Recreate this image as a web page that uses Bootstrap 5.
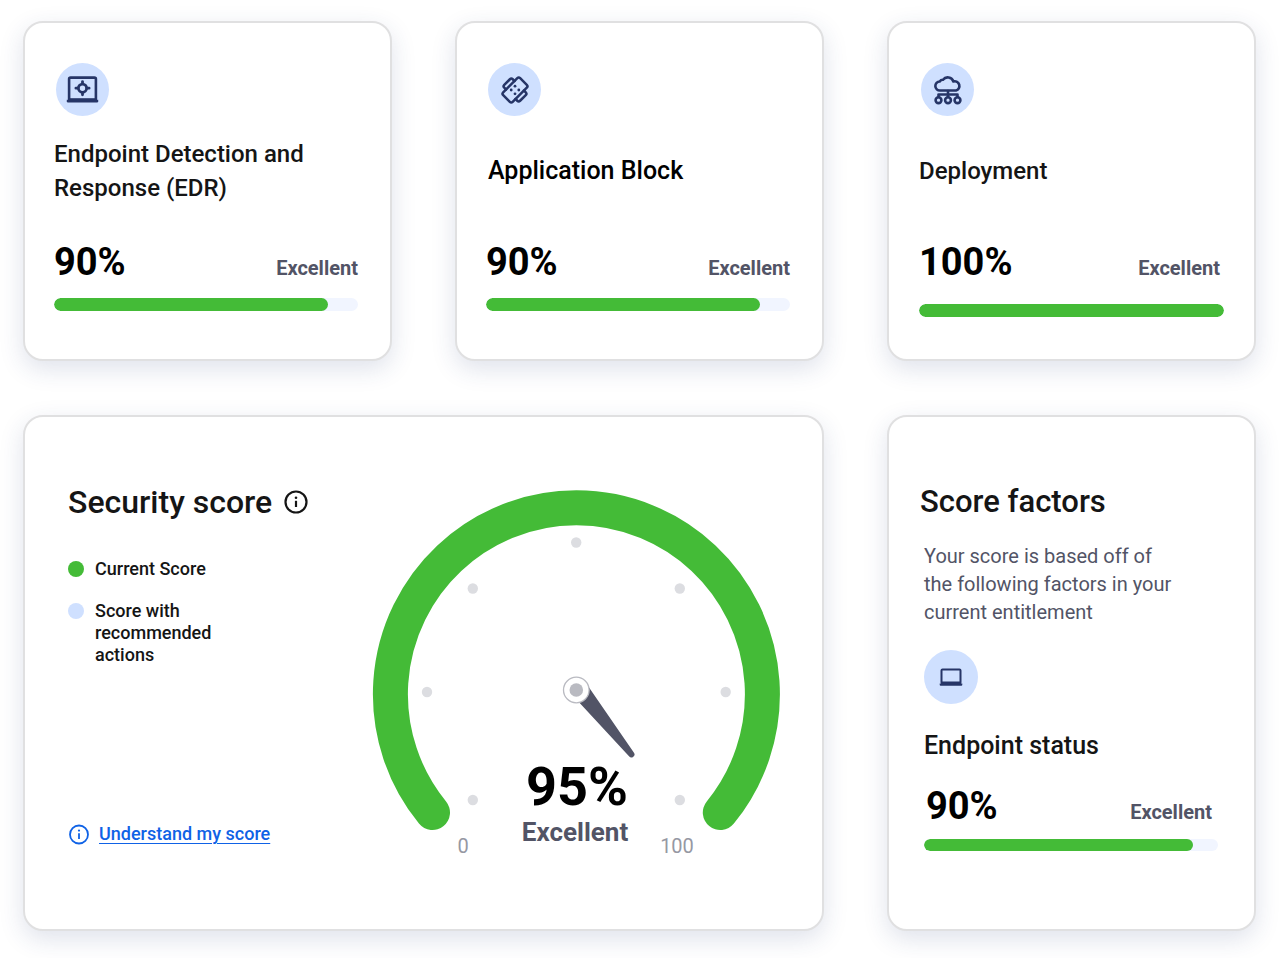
<!DOCTYPE html>
<html lang="en">
<head>
<meta charset="utf-8">
<meta name="viewport" content="width=device-width, initial-scale=1">
<title>Security score</title>
<link href="https://cdn.jsdelivr.net/npm/bootstrap@5.3.0/dist/css/bootstrap.min.css" rel="stylesheet">
<style>
  body { font-family: Roboto, "Liberation Sans", sans-serif; color: #151515; background: #fff; }
  .board { padding: 21px 31px 27px 23px; }
  .tiles { grid-template-columns: repeat(3, minmax(0, 1fr)); gap: 54px 63px; }
  .tile-wide { grid-column: span 2; }
  .tile { border: 2px solid #e0e0e1; border-radius: 20px; background: #fff; box-shadow: 0 8px 24px rgba(40, 60, 120, .15); }
  .tile-metric { padding: 40px 32px 42px 29px; }
  .tile-full { padding-left: 30px; padding-right: 30px; }
  .tile-full .rating { padding-right: 4px; }
  .tile-full .meter { margin-top: 20px; }
  .disc { width: 53px; height: 53px; border-radius: 50%; background: #cfe0ff; color: #263567; }
  .tile-metric .disc { margin-left: 2px; }
  .tile-title { font-size: 24px; line-height: 34px; font-weight: 500; margin: 0; }
  .tile-metric .tile-title { min-height: 68px; margin-top: 21px; margin-bottom: 35px; }
  .tile-title-lg { font-size: 25px; }
  .figure-value { font-size: 38px; line-height: 44px; font-weight: 700; color: #000; }
  .rating { font-size: 20px; line-height: 28px; font-weight: 700; color: #525466; }
  .meter { --bs-progress-height: 13px; --bs-progress-bg: #f1f5ff; --bs-progress-bar-bg: #44bb37; --bs-progress-border-radius: 8px; margin-top: 14px; }
  .meter .progress-bar { border-radius: 8px; }
  .tile-score { padding: 65px 41px 68px 43px; }
  .tile-factors { padding: 65px 36px 78px 31px; }
  .section-title { font-size: 31px; line-height: 40px; font-weight: 500; margin: 0; }
  .section-title-lg { font-size: 32px; }
  .legend-list { margin-top: 36px; gap: 20px; font-size: 18px; line-height: 22px; font-weight: 500; max-width: 150px; }
  .legend-list li { gap: 11px; }
  .key-dot { width: 16px; height: 16px; margin-top: 3px; border-radius: 50%; background: #44bb37; }
  .key-next { background: #cfe0ff; }
  .help { gap: 10px; margin-bottom: 16px; font-size: 18px; line-height: 22px; font-weight: 500; color: #0f62e6; }
  .help span { text-decoration: underline; text-decoration-thickness: 1px; text-underline-offset: 3px; }
  .gauge { width: 409px; max-width: 100%; height: auto; }
  .factors-body { padding-left: 4px; }
  .factors-note { font-size: 20px; line-height: 28px; color: #525466; max-width: 255px; margin: 20px 0 24px; }
  .tile-factors .disc { width: 54px; height: 54px; }
  .tile-factors .tile-title { margin-top: 25px; margin-bottom: 21px; }
  .tile-factors .meter { --bs-progress-height: 12px; margin-top: 11px; }
  .tile-factors .rating { padding-right: 6px; }
  .inset { padding-left: 2px; }
  @media (max-width: 991px) {
    .tiles { grid-template-columns: minmax(0, 1fr); gap: 32px; }
    .tile-wide { grid-column: auto; }
    .tile-score { flex-wrap: wrap; gap: 32px; }
  }
</style>
</head>
<body>
<main class="board">
  <div class="tiles d-grid">

    <section class="tile tile-metric">
      <div class="disc d-flex align-items-center justify-content-center">
        <svg width="34" height="34" viewBox="0 0 34 34" fill="none" stroke="currentColor" aria-hidden="true">
          <rect x="3.100" y="4.600" width="26.800" height="22.800" rx="1.500" stroke-width="2.600"/>
          <path d="M.800 26.700h31.400v1.600a1.200 1.200 0 0 1-1.200 1.200H2a1.200 1.200 0 0 1-1.200-1.200z" fill="currentColor" stroke="none"/>
          <path d="M3 25.200h27v2.500H3z" fill="currentColor" stroke="none"/>
          <circle cx="16.500" cy="15.200" r="4.100" stroke-width="2.800"/>
          <path d="M16.500 8.600v2M16.500 19.800v2M9.900 15.200h2M21.100 15.200h2" stroke-width="2.800" stroke-linecap="round"/>
        </svg>
      </div>
      <h2 class="tile-title d-flex align-items-center">Endpoint Detection and Response (EDR)</h2>
      <div class="d-flex justify-content-between align-items-baseline">
        <span class="figure-value">90%</span><span class="rating">Excellent</span>
      </div>
      <div class="progress meter" role="progressbar" aria-label="Endpoint Detection and Response" aria-valuenow="90" aria-valuemin="0" aria-valuemax="100"><div class="progress-bar" style="width:90%"></div></div>
    </section>

    <section class="tile tile-metric">
      <div class="disc d-flex align-items-center justify-content-center">
        <svg width="34" height="34" viewBox="0 0 34 34" fill="none" stroke="currentColor" stroke-width="2.500" stroke-linejoin="round" stroke-linecap="round" aria-hidden="true">
          <g transform="rotate(45 17 17)">
            <rect x="10.300" y="5" width="13.400" height="24" rx="2"/>
            <path d="M10.300 11H7.800a2 2 0 0 0-2 2v8a2 2 0 0 0 2 2h2.500M23.700 11h2.500a2 2 0 0 1 2 2v8a2 2 0 0 1-2 2h-2.500"/>
          </g>
          <g fill="currentColor" stroke="none">
            <circle cx="17" cy="13.200" r="1.400"/><circle cx="13.200" cy="17" r="1.400"/><circle cx="20.800" cy="17" r="1.400"/><circle cx="17" cy="20.800" r="1.400"/>
          </g>
        </svg>
      </div>
      <h2 class="tile-title tile-title-lg inset d-flex align-items-center text-black">Application Block</h2>
      <div class="d-flex justify-content-between align-items-baseline">
        <span class="figure-value">90%</span><span class="rating">Excellent</span>
      </div>
      <div class="progress meter" role="progressbar" aria-label="Application Block" aria-valuenow="90" aria-valuemin="0" aria-valuemax="100"><div class="progress-bar" style="width:90%"></div></div>
    </section>

    <section class="tile tile-metric tile-full">
      <div class="disc d-flex align-items-center justify-content-center">
        <svg width="34" height="34" viewBox="0 0 34 34" fill="none" stroke="currentColor" stroke-width="2.600" stroke-linejoin="round" stroke-linecap="round" aria-hidden="true">
          <path d="M9 17.500a4.500 4.500 0 0 1-.3-9 3.800 3.800 0 0 1 3.300-1.700A5.900 5.900 0 0 1 22.400 8.500a4.600 4.600 0 0 1 2.600 9z"/>
          <path d="M17 18v6M7.500 24v-2.500h19V24"/>
          <circle cx="7.500" cy="27.200" r="2.900"/><circle cx="17" cy="27.200" r="2.900"/><circle cx="26.500" cy="27.200" r="2.900"/>
        </svg>
      </div>
      <h2 class="tile-title d-flex align-items-center">Deployment</h2>
      <div class="d-flex justify-content-between align-items-baseline">
        <span class="figure-value">100%</span><span class="rating">Excellent</span>
      </div>
      <div class="progress meter" role="progressbar" aria-label="Deployment" aria-valuenow="100" aria-valuemin="0" aria-valuemax="100"><div class="progress-bar" style="width:100%"></div></div>
    </section>

    <section class="tile tile-wide tile-score d-flex justify-content-between">
      <div class="d-flex flex-column">
        <h1 class="section-title section-title-lg d-flex align-items-center gap-2">Security score
          <svg width="32" height="32" viewBox="0 0 32 32" fill="none" stroke="currentColor" stroke-width="2.200" aria-hidden="true">
            <circle cx="16" cy="16" r="10.500"/><path d="M16 14.800v6.200" /><circle cx="16" cy="11.800" r="1.300" fill="currentColor" stroke="none"/>
          </svg>
        </h1>
        <ul class="legend-list list-unstyled d-flex flex-column mb-0">
          <li class="d-flex"><i class="key-dot flex-shrink-0"></i>Current Score</li>
          <li class="d-flex"><i class="key-dot key-next flex-shrink-0"></i>Score with recommended actions</li>
        </ul>
        <a href="#" class="help d-flex align-items-center mt-auto text-decoration-none">
          <svg width="21" height="21" viewBox="0 0 21 21" fill="none" stroke="currentColor" stroke-width="1.800" aria-hidden="true">
            <circle cx="11" cy="10.500" r="9"/><path d="M11 9.300v5.700"/><circle cx="11" cy="6.600" r="1.100" fill="currentColor" stroke="none"/>
          </svg>
          <span>Understand my score</span>
        </a>
      </div>
      <svg class="gauge" viewBox="372 482 409 379" font-family="Roboto, 'Liberation Sans', sans-serif" role="group" aria-label="Security score gauge">
        <path d="M432.500 812.500A186 186.500 0 1 1 720.300 812.500" fill="none" stroke="#44bb37" stroke-width="35" stroke-linecap="round"/>
        <g fill="#dcdde1">
          <circle cx="427" cy="692" r="5.200"/><circle cx="725.700" cy="692" r="5.200"/><circle cx="472.800" cy="800" r="5.200"/><circle cx="679.800" cy="800" r="5.200"/><circle cx="472.800" cy="588.500" r="5.200"/><circle cx="679.800" cy="588.500" r="5.200"/><circle cx="576.200" cy="542.500" r="5.200"/>
        </g>
        <path d="M576 699L588 686L633.800 752.400A2.900 2.900 0 0 1 629 756.200Z" fill="#525466"/>
        <circle cx="576.300" cy="690" r="12.800" fill="#fff" stroke="#b9bac1" stroke-width="1.300"/>
        <circle cx="576.300" cy="690" r="6.800" fill="#b9bac1"/>
        <text x="577" y="805" font-size="54" font-weight="700" text-anchor="middle" fill="#000">95%</text>
        <text x="575" y="841" font-size="26" font-weight="700" text-anchor="middle" fill="#525466">Excellent</text>
        <text x="463" y="853" font-size="20" text-anchor="middle" fill="#9698a3">0</text>
        <text x="677" y="853" font-size="20" text-anchor="middle" fill="#9698a3">100</text>
      </svg>
    </section>

    <section class="tile tile-factors">
      <h2 class="section-title">Score factors</h2>
      <div class="factors-body">
        <p class="factors-note">Your score is based off of the following factors in your current entitlement</p>
        <div class="disc d-flex align-items-center justify-content-center">
          <svg width="26" height="26" viewBox="0 0 26 26" fill="none" stroke="currentColor" aria-hidden="true">
            <rect x="3.500" y="5.600" width="19" height="14" rx="1" stroke-width="2"/>
            <path d="M1.700 19.500h22.600v1.200a1 1 0 0 1-1 1H2.700a1 1 0 0 1-1-1zM3 17.600h20v2.500H3z" fill="currentColor" stroke="none"/>
          </svg>
        </div>
        <h3 class="tile-title tile-title-lg">Endpoint status</h3>
        <div class="d-flex justify-content-between align-items-baseline">
          <span class="figure-value inset">90%</span><span class="rating">Excellent</span>
        </div>
        <div class="progress meter" role="progressbar" aria-label="Endpoint status" aria-valuenow="90" aria-valuemin="0" aria-valuemax="100"><div class="progress-bar" style="width:91.5%"></div></div>
      </div>
    </section>

  </div>
</main>
<script src="https://cdn.jsdelivr.net/npm/bootstrap@5.3.0/dist/js/bootstrap.bundle.min.js"></script>
</body>
</html>
